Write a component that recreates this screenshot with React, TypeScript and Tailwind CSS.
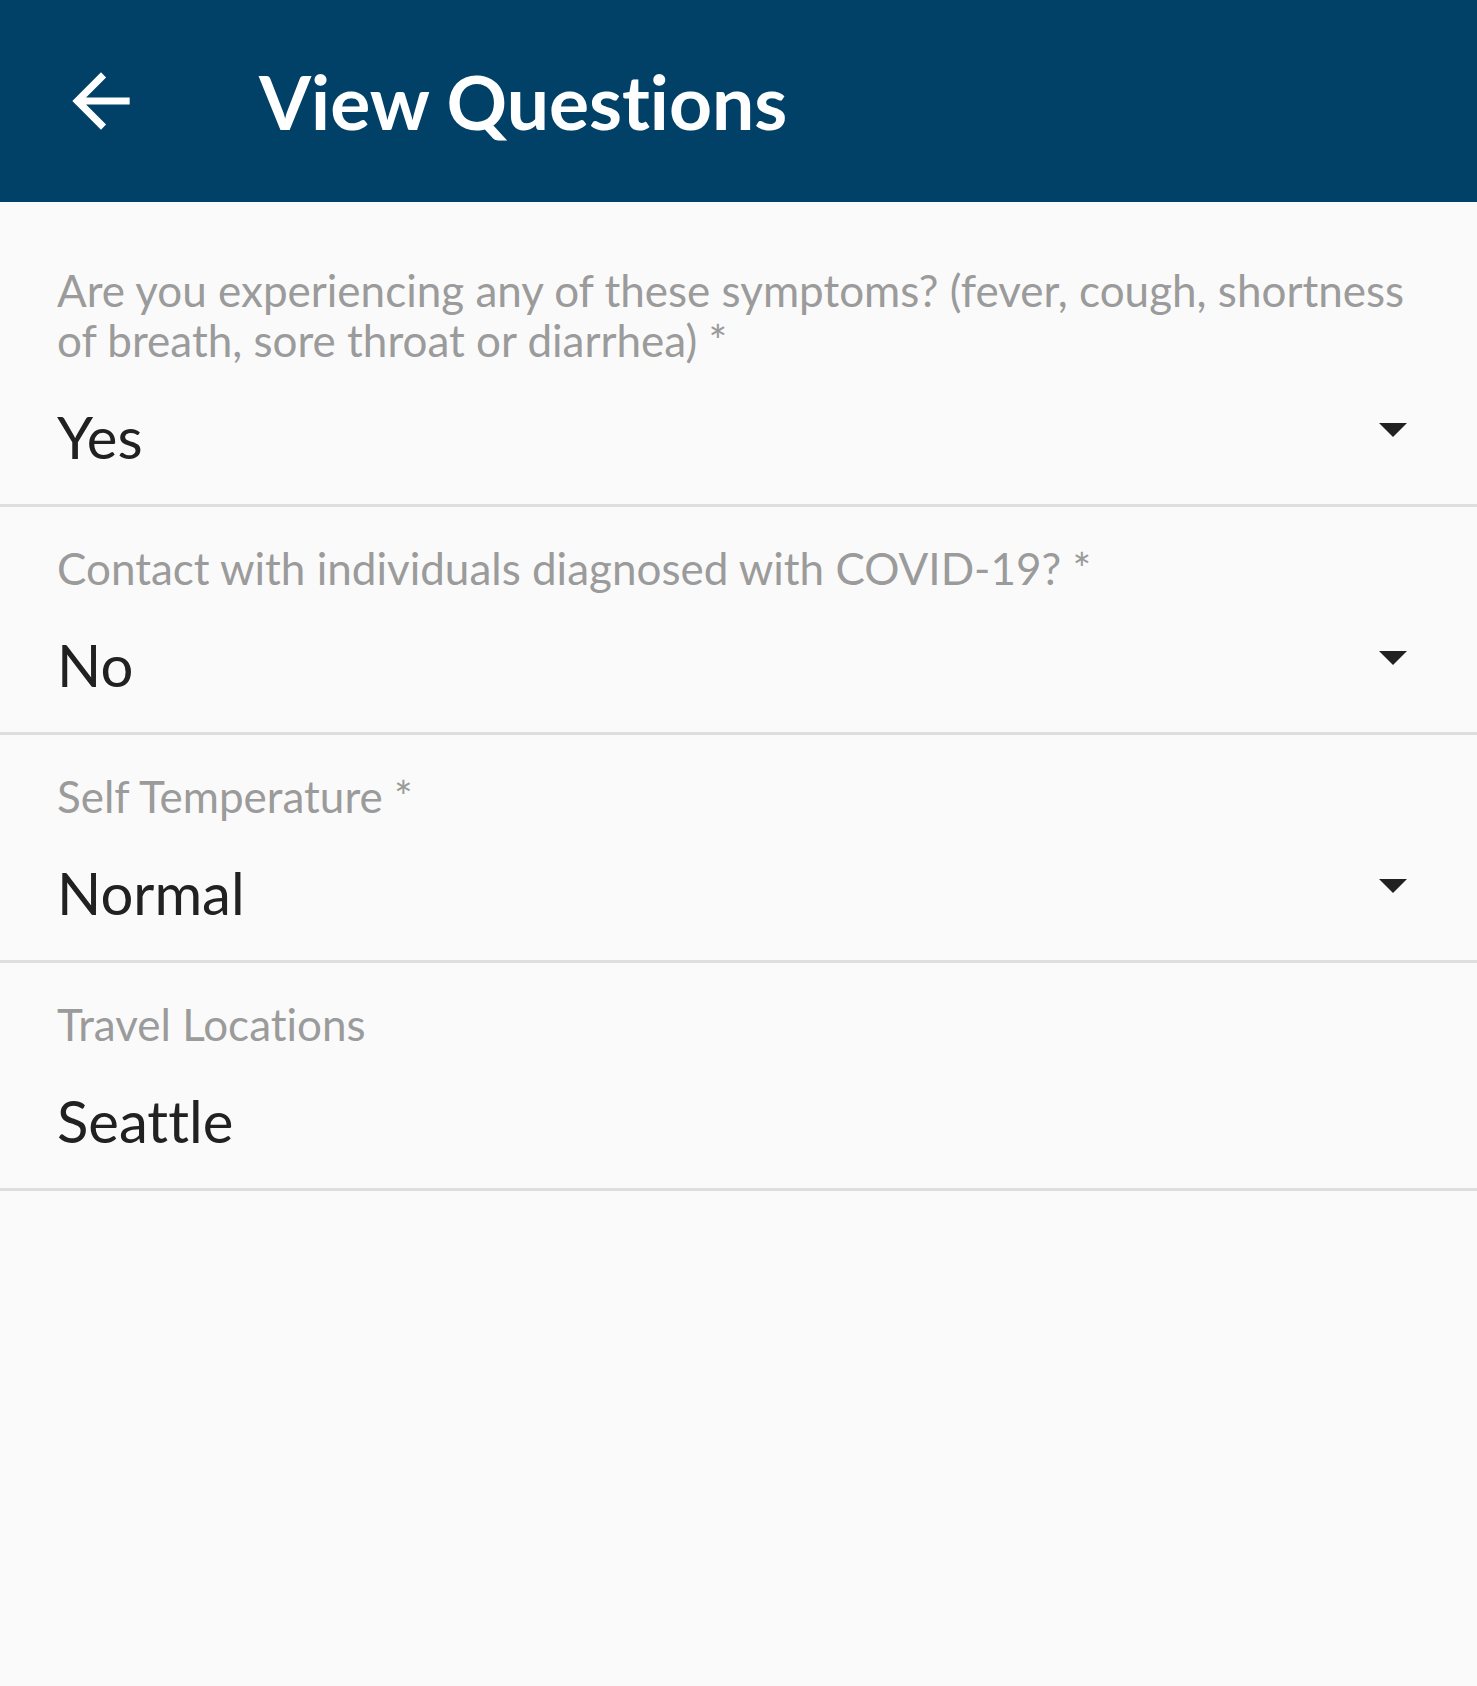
const questions = [
  {
    label: "Are you experiencing any of these symptoms? (fever, cough, shortness of breath, sore throat or diarrhea) *",
    value: "Yes",
    dropdown: true,
  },
  { label: "Contact with individuals diagnosed with COVID-19? *", value: "No", dropdown: true },
  { label: "Self Temperature *", value: "Normal", dropdown: true },
  { label: "Travel Locations", value: "Seattle", dropdown: false },
];

function BackArrow() {
  return (
    <svg viewBox="0 0 24 24" className="w-[86px] h-[86px]" fill="#ffffff" aria-hidden>
      <path d="M20 11H7.83l5.59-5.59L12 4l-8 8 8 8 1.41-1.41L7.83 13H20v-2z" />
    </svg>
  );
}

function Caret() {
  return (
    <svg viewBox="0 0 28 14" className="w-[28px] h-[14px] mb-[14px] shrink-0" fill="#212121" aria-hidden>
      <path d="M0 0h28L14 14z" />
    </svg>
  );
}

export default function App() {
  return (
    <div
      className="min-h-[1686px] w-full bg-[#fafafa] [font-variant-ligatures:none]"
      style={{ fontFamily: "Lato, 'Open Sans', sans-serif" }}
    >
      {/* app bar */}
      <header className="h-[202px] bg-[#014067] flex items-center pl-[58px]">
        <BackArrow />
        <h1 className="ml-[115px] text-white font-bold text-[75px] leading-none">
          View Questions
        </h1>
      </header>

      {questions.map((q, i) => (
        <div
          key={q.label}
          className={
            "pl-[57px] pb-[32px] border-b-[3px] border-[#dedede] " +
            (i === 0 ? "pt-[63px]" : "pt-[36px]")
          }
        >
          <div className="text-[44px] leading-[50px] text-[#9b9b9b] pr-[30px]">{q.label}</div>
          <div className="mt-[37px] pr-[70px] flex items-center justify-between h-[70px]">
            <span className="text-[58px] leading-[70px] text-[#212121]">{q.value}</span>
            {q.dropdown && <Caret />}
          </div>
        </div>
      ))}
    </div>
  );
}
